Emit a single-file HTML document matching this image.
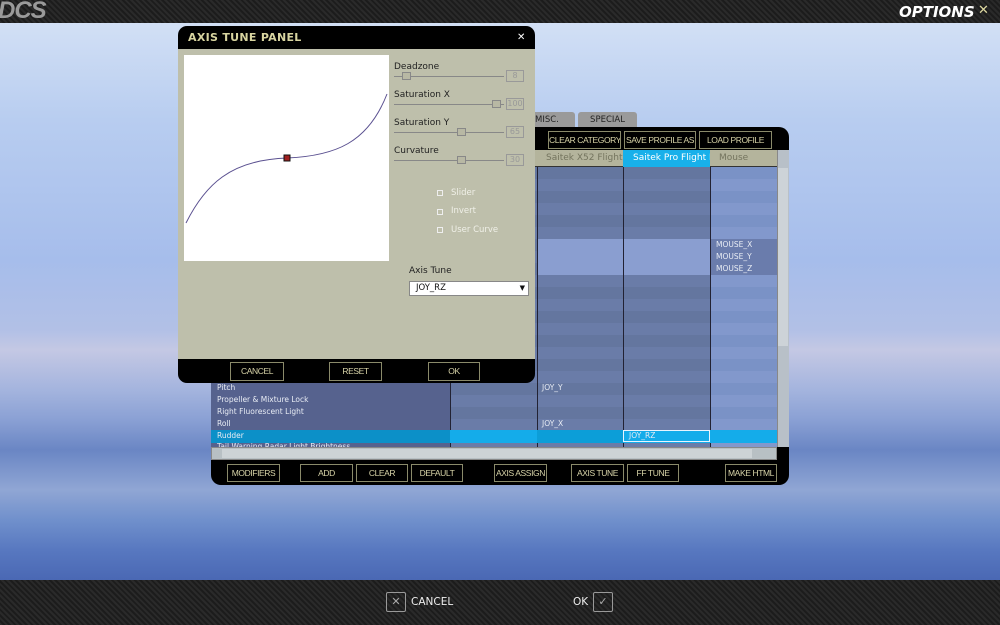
<!DOCTYPE html>
<html><head><meta charset="utf-8"><style>
*{margin:0;padding:0;box-sizing:border-box}
body{width:1000px;height:625px;overflow:hidden;position:relative;font-family:"DejaVu Sans","Liberation Sans",sans-serif;
background:linear-gradient(180deg,#d8e4f6 0px,#b8cdf0 120px,#a6bdeb 260px,#b2c0e6 330px,#c4c8e4 350px,#a4b4de 390px,#8aa0d4 420px,#6a86c4 450px,#90a6d4 490px,#7090cc 520px,#5878c0 550px,#4a68b4 580px);}
.abs{position:absolute}
.bar{background:repeating-linear-gradient(45deg,#2a2a2a 0 2px,#1c1c1c 2px 4px)}
.btn{position:absolute;border:1px solid #8a8a6a;color:#d8d4a8;font-family:"Liberation Sans",sans-serif;font-size:8.5px;text-align:center;line-height:17px;background:#000;white-space:nowrap;overflow:hidden;letter-spacing:-.4px}
.row{position:absolute;left:211px;width:566px;height:12px}
.t{position:absolute;font-size:7.5px;color:#e8ecf4;line-height:12px;white-space:nowrap}
.lbl{position:absolute;font-size:9px;color:#222}
.sl{position:absolute;height:1px;background:#888;width:110px;left:394px}
.knob{position:absolute;width:9px;height:8px;border:1px solid #888;background:#b8b8a4}
.val{position:absolute;left:506px;width:18px;height:12px;border:1px solid #999;font-size:8px;color:#999;text-align:center;line-height:10px}
.cb{position:absolute;left:437px;width:6px;height:6px;border:1px solid #eee}
.cbl{position:absolute;left:451px;font-size:8.5px;color:#f0f0e8}
</style></head><body>
<div class="abs bar" style="left:0;top:0;width:1000px;height:23px"></div>
<div class="abs" style="left:-2px;top:-1px;font:bold italic 24px 'Liberation Sans',sans-serif;color:#9a9a9a;letter-spacing:-1px;line-height:24px">DCS</div>
<div class="abs" style="left:899px;top:3px;font:bold italic 15px 'DejaVu Sans',sans-serif;color:#fff">OPTIONS</div>
<div class="abs" style="left:978px;top:3px;font-size:13px;color:#ddd8a0">✕</div>

<div class="abs" style="left:530px;top:112px;width:45px;height:16px;background:#9a9a9a;border-radius:3px 3px 0 0;font-size:8.5px;line-height:16px;padding-left:5px;color:#222">MISC.</div>
<div class="abs" style="left:578px;top:112px;width:59px;height:16px;background:#9a9a9a;border-radius:3px 3px 0 0;font-size:8.5px;line-height:16px;text-align:center;color:#222">SPECIAL</div>

<div class="abs" style="left:211px;top:127px;width:578px;height:358px;background:#000;border-radius:0 10px 10px 10px"></div>
<div class="btn" style="left:548px;top:131px;width:73px;height:18px">CLEAR CATEGORY</div>
<div class="btn" style="left:624px;top:131px;width:72px;height:18px">SAVE PROFILE AS</div>
<div class="btn" style="left:699px;top:131px;width:73px;height:18px">LOAD PROFILE</div>
<div class="abs" style="left:211px;top:150px;width:566px;height:17px;background:#b4b49c;border-bottom:1px solid #333"></div>
<div class="abs" style="left:546px;top:150px;font-size:9px;line-height:17px;color:#74745e;width:77px;overflow:hidden;white-space:nowrap">Saitek X52 Flight Co</div>
<div class="abs" style="left:623px;top:150px;width:87px;height:17px;background:#18b0ea;font-size:9px;line-height:17px;color:#fff;padding-left:10px;overflow:hidden;white-space:nowrap">Saitek Pro Flight Rud</div>
<div class="abs" style="left:719px;top:150px;font-size:9px;line-height:17px;color:#74745e">Mouse</div>
<div class="abs" style="left:211px;top:167px;width:566px;height:280px;background:repeating-linear-gradient(180deg,#64769f 0 12px,#6a7ca8 12px 24px)"></div>
<div class="abs" style="left:710px;top:167px;width:67px;height:280px;background:repeating-linear-gradient(180deg,#7a92c6 0 12px,#8298cc 12px 24px)"></div>
<div class="abs" style="left:537px;top:239px;width:173px;height:36px;background:#8a9ed0"></div>
<div class="abs" style="left:710px;top:239px;width:67px;height:36px;background:#6a7cac"></div>
<div class="abs" style="left:211px;top:382px;width:239px;height:65px;background:#56628e"></div>
<div class="abs" style="left:450px;top:167px;width:1px;height:280px;background:#223"></div>
<div class="abs" style="left:537px;top:167px;width:1px;height:280px;background:#223"></div>
<div class="abs" style="left:623px;top:167px;width:1px;height:280px;background:#223"></div>
<div class="abs" style="left:710px;top:167px;width:1px;height:280px;background:#223"></div>
<div class="t" style="left:716px;top:239px">MOUSE_X</div>
<div class="t" style="left:716px;top:251px">MOUSE_Y</div>
<div class="t" style="left:716px;top:263px">MOUSE_Z</div>
<div class="t" style="left:217px;top:382px">Pitch</div>
<div class="t" style="left:542px;top:382px">JOY_Y</div>
<div class="t" style="left:217px;top:394px">Propeller &amp; Mixture Lock</div>
<div class="t" style="left:217px;top:406px">Right Fluorescent Light</div>
<div class="t" style="left:217px;top:418px">Roll</div>
<div class="t" style="left:542px;top:418px">JOY_X</div>
<div class="row" style="top:430px;height:13px;background:#14acea"></div>
<div class="abs" style="left:211px;top:430px;width:239px;height:13px;background:#0c90c8"></div>
<div class="abs" style="left:537px;top:430px;width:86px;height:13px;background:#0c9ed8"></div>
<div class="abs" style="left:623px;top:430px;width:87px;height:12px;border:1px solid #e8f4ff;background:#14acea"></div>
<div class="t" style="left:217px;top:430px">Rudder</div>
<div class="t" style="left:629px;top:430px">JOY_RZ</div>
<div class="t" style="left:217px;top:442px;height:5px;overflow:hidden;line-height:10px">Tail Warning Radar Light Brightness</div>
<div class="abs" style="left:777px;top:150px;width:12px;height:297px;background:#b8c0c8;border-left:1px solid #888"></div>
<div class="abs" style="left:778px;top:168px;width:10px;height:178px;background:#cdd3d8"></div>
<div class="abs" style="left:211px;top:447px;width:566px;height:13px;background:#b8c0c4;border:1px solid #888"></div>
<div class="abs" style="left:222px;top:449px;width:530px;height:9px;background:#cdd3d6"></div>
<div class="btn" style="left:227px;top:464px;width:53px;height:18px">MODIFIERS</div>
<div class="btn" style="left:300px;top:464px;width:53px;height:18px">ADD</div>
<div class="btn" style="left:356px;top:464px;width:52px;height:18px">CLEAR</div>
<div class="btn" style="left:411px;top:464px;width:52px;height:18px">DEFAULT</div>
<div class="btn" style="left:494px;top:464px;width:53px;height:18px">AXIS ASSIGN</div>
<div class="btn" style="left:571px;top:464px;width:53px;height:18px">AXIS TUNE</div>
<div class="btn" style="left:627px;top:464px;width:52px;height:18px">FF TUNE</div>
<div class="btn" style="left:725px;top:464px;width:52px;height:18px">MAKE HTML</div>

<div class="abs" style="left:178px;top:26px;width:357px;height:357px;background:#000;border-radius:9px"></div>
<div class="abs" style="left:178px;top:49px;width:357px;height:310px;background:#bebfab"></div>
<div class="abs" style="left:188px;top:31px;font:bold 11px 'DejaVu Sans',sans-serif;color:#d8d4a0;letter-spacing:.3px">AXIS TUNE PANEL</div>
<div class="abs" style="left:517px;top:32px;font-size:10px;color:#fff">✕</div>
<div class="abs" style="left:184px;top:55px;width:205px;height:206px;background:#fff"></div>
<svg class="abs" style="left:0;top:0" width="1000" height="625"><path d="M186,223 C205,185 230,160 287,158 C335,156 368,143 387,94" fill="none" stroke="#5a5090" stroke-width="1"/><rect x="284" y="155" width="6" height="6" fill="#a02020" stroke="#111" stroke-width="1"/></svg>
<div class="lbl" style="left:394px;top:62px">Deadzone</div>
<div class="sl" style="top:76px"></div><div class="knob" style="left:402px;top:72px"></div><div class="val" style="top:70px">8</div>
<div class="lbl" style="left:394px;top:90px">Saturation X</div>
<div class="sl" style="top:104px"></div><div class="knob" style="left:492px;top:100px"></div><div class="val" style="top:98px">100</div>
<div class="lbl" style="left:394px;top:118px">Saturation Y</div>
<div class="sl" style="top:132px"></div><div class="knob" style="left:457px;top:128px"></div><div class="val" style="top:126px">65</div>
<div class="lbl" style="left:394px;top:146px">Curvature</div>
<div class="sl" style="top:160px"></div><div class="knob" style="left:457px;top:156px"></div><div class="val" style="top:154px">30</div>
<div class="cb" style="top:190px"></div><div class="cbl" style="top:188px">Slider</div>
<div class="cb" style="top:209px"></div><div class="cbl" style="top:206px">Invert</div>
<div class="cb" style="top:227px"></div><div class="cbl" style="top:225px">User Curve</div>
<div class="lbl" style="left:409px;top:266px">Axis Tune</div>
<div class="abs" style="left:409px;top:281px;width:120px;height:15px;background:#fff;border:1px solid #888;font-size:8.5px;line-height:13px;padding-left:6px;color:#111">JOY_RZ<span style="position:absolute;right:3px;font-size:7px">▼</span></div>
<div class="btn" style="left:230px;top:362px;width:54px;height:19px">CANCEL</div>
<div class="btn" style="left:329px;top:362px;width:53px;height:19px">RESET</div>
<div class="btn" style="left:428px;top:362px;width:52px;height:19px">OK</div>

<div class="abs bar" style="left:0;top:580px;width:1000px;height:45px"></div>
<div class="abs" style="left:386px;top:592px;width:20px;height:20px;border:1px solid #999;border-radius:2px;color:#aaa;font-size:11px;text-align:center;line-height:18px">✕</div>
<div class="abs" style="left:411px;top:596px;font-size:10.5px;color:#eee">CANCEL</div>
<div class="abs" style="left:573px;top:596px;font-size:10.5px;color:#eee">OK</div>
<div class="abs" style="left:593px;top:592px;width:20px;height:20px;border:1px solid #999;border-radius:2px;color:#aaa;font-size:11px;text-align:center;line-height:18px">✓</div>
</body></html>
